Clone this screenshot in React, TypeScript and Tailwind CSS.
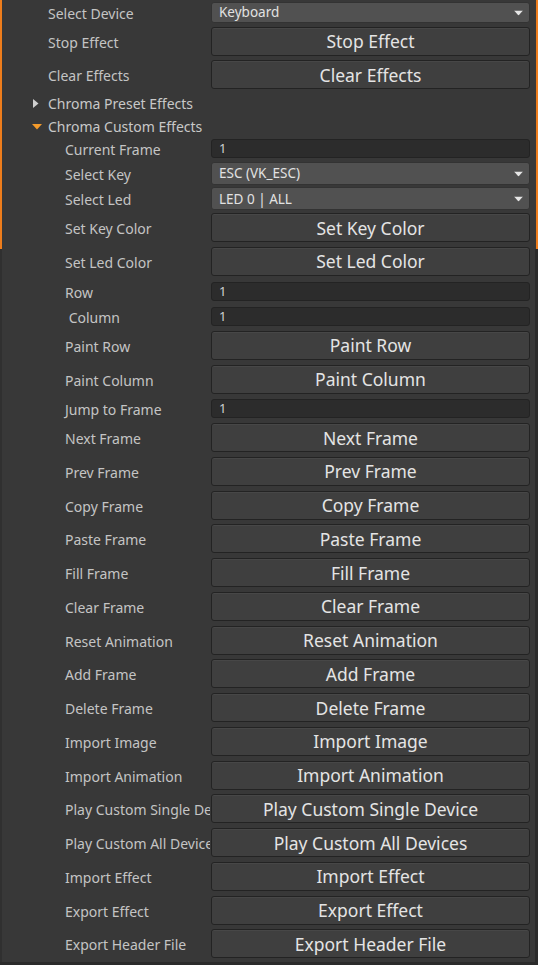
import type { ReactNode } from "react";

const topButtons = ["Stop Effect", "Clear Effects"];
const colorButtons = ["Set Key Color", "Set Led Color"];
const paintButtons = ["Paint Row", "Paint Column"];
const frameButtons = [
  "Next Frame",
  "Prev Frame",
  "Copy Frame",
  "Paste Frame",
  "Fill Frame",
  "Clear Frame",
  "Reset Animation",
  "Add Frame",
  "Delete Frame",
  "Import Image",
  "Import Animation",
  "Play Custom Single Device",
  "Play Custom All Devices",
  "Import Effect",
  "Export Effect",
  "Export Header File",
];

function Label({ text, nested }: { text: string; nested?: boolean }) {
  return (
    <div
      className={
        nested
          ? "w-[210px] mr-[1px] shrink-0 overflow-hidden whitespace-pre pl-[65px] pt-[3px] text-[14px] leading-[20px] text-[#c4c4c4]"
          : "w-[210px] mr-[1px] shrink-0 overflow-hidden whitespace-pre pl-[48px] pt-[3px] text-[14px] leading-[20px] text-[#c4c4c4]"
      }
    >
      {text}
    </div>
  );
}

function Arrow() {
  return (
    <svg width="9" height="5" viewBox="0 0 9 5" className="absolute right-[6px] top-1/2 -translate-y-1/2">
      <polygon points="0,0 9,0 4.5,5" fill="#e6e6e6" />
    </svg>
  );
}

function Dropdown({ label, value, nested, h }: { label: string; value: string; nested?: boolean; h: string }) {
  return (
    <div className={`flex items-center ${h}`}>
      <Label text={label} nested={nested} />
      <div className="relative flex h-full w-[319px] items-center rounded-[3px] border border-[#333] bg-[#515151] pl-[7px] text-[13.5px] text-[#e2e2e2]">
        {value}
        <Arrow />
      </div>
    </div>
  );
}

function Field({ label, value, nested, h }: { label: string; value: string; nested?: boolean; h: string }) {
  return (
    <div className={`flex items-center ${h}`}>
      <Label text={label} nested={nested} />
      <div className="flex h-full w-[319px] items-center rounded-[3px] border border-[#232323] bg-[#2c2c2c] pl-[7px] text-[13px] text-[#d0d0d0]">
        {value}
      </div>
    </div>
  );
}

function ButtonRow({ label, nested }: { label: string; nested?: boolean }) {
  return (
    <div className="flex h-[33.75px] items-center">
      <Label text={label} nested={nested} />
      <button className="flex h-[29px] w-[319px] items-center justify-center whitespace-nowrap rounded-[3px] border border-[#232323] bg-[#3f3f3f] text-[17.5px] text-[#e4e4e4] shadow-[inset_0_1px_0_#474747]">
        {label}
      </button>
    </div>
  );
}

function Foldout({ text, open }: { text: string; open?: boolean }) {
  return (
    <div className="flex h-[23px] items-center">
      <div className="flex w-[48px] shrink-0 justify-end pr-[6px] pt-[1px]">
        {open ? (
          <svg width="10" height="6" viewBox="0 0 10 6">
            <polygon points="0,0 10,0 5,5.5" fill="#f39a2b" />
          </svg>
        ) : (
          <svg width="6" height="9" viewBox="0 0 6 9" className="mr-[3px]">
            <polygon points="0,0 5.5,4.5 0,9" fill="#cfcfcf" />
          </svg>
        )}
      </div>
      <div className="pt-[2px] text-[14px] leading-[20px] text-[#c8c8c8]">{text}</div>
    </div>
  );
}

function Group({ className, children }: { className: string; children: ReactNode }) {
  return <div className={className}>{children}</div>;
}

export default function App() {
  return (
    <div className="relative h-[965px] w-[538px] overflow-hidden bg-[#383838] font-['Noto_Sans',sans-serif]">
      <div className="flex flex-col pt-[2px]">
        <Dropdown label="Select Device" value="Keyboard" h="h-[21px]" />
        <Group className="mt-[1.3px]">
          {topButtons.map((b) => (
            <ButtonRow key={b} label={b} />
          ))}
        </Group>
        <Foldout text="Chroma Preset Effects" />
        <Foldout text="Chroma Custom Effects" open />
        <Group className="mt-[1.5px]">
          <Field label="Current Frame" value="1" nested h="h-[19px]" />
        </Group>
        <Group className="mt-[4px]">
          <Dropdown label="Select Key" value="ESC (VK_ESC)" nested h="h-[22.5px]" />
        </Group>
        <Group className="mt-[2.7px]">
          <Dropdown label="Select Led" value="LED 0 | ALL" nested h="h-[22.5px]" />
        </Group>
        <Group className="mt-[0.9px]">
          {colorButtons.map((b) => (
            <ButtonRow key={b} label={b} nested />
          ))}
        </Group>
        <Group className="mt-[3.9px]">
          <Field label="Row" value="1" nested h="h-[18.7px]" />
        </Group>
        <Group className="mt-[6.3px]">
          <Field label=" Column" value="1" nested h="h-[18.7px]" />
        </Group>
        <Group className="mt-[2.6px]">
          {paintButtons.map((b) => (
            <ButtonRow key={b} label={b} nested />
          ))}
        </Group>
        <Group className="mt-[3.2px]">
          <Field label="Jump to Frame" value="1" nested h="h-[19px]" />
        </Group>
        <Group className="mt-[2.6px]">
          {frameButtons.map((b) => (
            <ButtonRow key={b} label={b} nested />
          ))}
        </Group>
      </div>

      {/* selection outline + panel edges */}
      <div className="absolute left-0 top-0 h-[249px] w-[2px] bg-[#ee7d1c]" />
      <div className="absolute left-[536px] top-0 h-[249px] w-[2px] bg-[#ee7d1c]" />
      <div className="absolute left-0 top-[249px] h-[716px] w-[2px] bg-[#303030]" />
      <div className="absolute left-[535px] top-[249px] h-[716px] w-[3px] bg-[#2b2b2b]" />
      <div className="absolute bottom-0 left-0 h-[3px] w-[538px] bg-[#2b2b2b]" />
    </div>
  );
}
